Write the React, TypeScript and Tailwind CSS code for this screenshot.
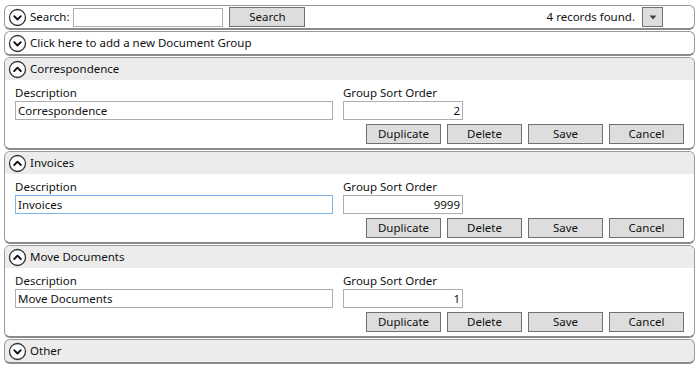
import React from "react";

const font = { fontFamily: '"Noto Sans", "Open Sans", sans-serif' };

function Chevron({ up }: { up?: boolean }) {
  return (
    <svg width="19" height="19" viewBox="0 0 19 19" className="shrink-0">
      <circle cx="9.5" cy="9.5" r="8" fill="white" stroke="#333" strokeWidth="1.3" />
      {up ? (
        <path d="M6.2 11 L9.5 7.7 L12.8 11" fill="none" stroke="#111" strokeWidth="1.9" strokeLinecap="round" strokeLinejoin="round" />
      ) : (
        <path d="M6.2 8.2 L9.5 11.5 L12.8 8.2" fill="none" stroke="#111" strokeWidth="1.9" strokeLinecap="round" strokeLinejoin="round" />
      )}
    </svg>
  );
}

function Btn({ label, w = "w-[75px]" }: { label: string; w?: string }) {
  return (
    <div className={`${w} h-[20px] bg-[#dddddd] border border-[#707070] flex items-center justify-center text-[11.5px] text-[#111]`}>
      {label}
    </div>
  );
}

function Collapsed({ children, gray }: { children: React.ReactNode; gray?: boolean }) {
  return (
    <div
      className={`h-[25px] rounded-[6px] border border-[#9a9a9a] border-b-[2px] border-b-[#8a8a8a] flex items-center pl-[3px] pr-[31px] gap-[3px] ${gray ? "bg-[#ececec]" : "bg-white"}`}
    >
      {children}
    </div>
  );
}

function Expanded({ title, value, order, focused }: { title: string; value: string; order: string; focused?: boolean }) {
  return (
    <div className="h-[93px] rounded-[6px] border border-[#9a9a9a] border-b-[2px] border-b-[#8a8a8a] overflow-hidden flex flex-col bg-white">
      <div className="h-[22px] bg-[#ececec] flex items-center pl-[3px] gap-[3px] shrink-0">
        <Chevron up />
        <span className="text-[11.5px] text-[#111]">{title}</span>
      </div>
      <div className="flex flex-col pl-[10px] pr-[10px] pt-[6px]">
        <div className="flex gap-[10px]">
          <div className="flex flex-col w-[318px]">
            <span className="text-[11.5px] leading-[14px] text-[#111]">Description</span>
            <div
              className={`mt-[1px] h-[19px] border ${focused ? "border-[#7eb4ea]" : "border-[#abadb3]"} flex items-center px-[2px] text-[11.5px] text-[#111]`}
            >
              {value}
            </div>
          </div>
          <div className="flex flex-col w-[120px]">
            <span className="text-[11.5px] leading-[14px] text-[#111] whitespace-nowrap">Group Sort Order</span>
            <div className="mt-[1px] h-[19px] border border-[#abadb3] flex items-center justify-end px-[2px] text-[11.5px] text-[#111]">
              {order}
            </div>
          </div>
        </div>
        <div className="flex justify-end gap-[6px] mt-[4px]">
          <Btn label="Duplicate" />
          <Btn label="Delete" />
          <Btn label="Save" />
          <Btn label="Cancel" />
        </div>
      </div>
    </div>
  );
}

export default function App() {
  return (
    <div style={font} className="w-[698px] h-[367px] bg-white pt-[5px] pl-[4px] pr-[3px] flex flex-col gap-[1px] overflow-hidden">
      <Collapsed>
        <Chevron />
        <span className="text-[11.5px] text-[#111]">Search:</span>
        <div className="ml-[1px] w-[150px] h-[19px] border border-[#abadb3] bg-white" />
        <div className="ml-[3px]">
          <Btn label="Search" w="w-[76px]" />
        </div>
        <div className="flex-1" />
        <span className="text-[11.5px] text-[#111] mr-[4px]">4 records found.</span>
        <div className="w-[21px] h-[20px] bg-[#dddddd] border border-[#707070] flex items-center justify-center">
          <svg width="8" height="5" viewBox="0 0 8 5"><path d="M0.5 0.5 L7.5 0.5 L4 4.5 Z" fill="#444" /></svg>
        </div>
      </Collapsed>
      <Collapsed>
        <Chevron />
        <span className="text-[11.5px] text-[#111]">Click here to add a new Document Group</span>
      </Collapsed>
      <Expanded title="Correspondence" value="Correspondence" order="2" />
      <Expanded title="Invoices" value="Invoices" order="9999" focused />
      <Expanded title="Move Documents" value="Move Documents" order="1" />
      <Collapsed gray>
        <Chevron />
        <span className="text-[11.5px] text-[#111]">Other</span>
      </Collapsed>
    </div>
  );
}
